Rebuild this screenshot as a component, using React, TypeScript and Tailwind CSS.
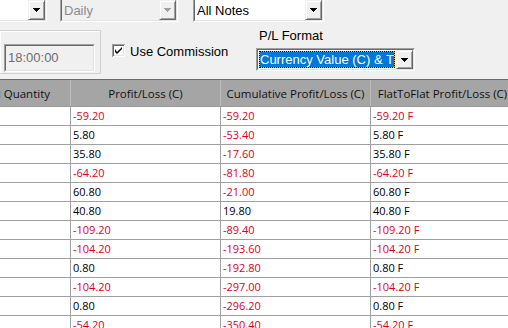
import React from "react";

const rows: [string, string, string][] = [
  ["-59.20", "-59.20", "-59.20 F"],
  ["5.80", "-53.40", "5.80 F"],
  ["35.80", "-17.60", "35.80 F"],
  ["-64.20", "-81.80", "-64.20 F"],
  ["60.80", "-21.00", "60.80 F"],
  ["40.80", "19.80", "40.80 F"],
  ["-109.20", "-89.40", "-109.20 F"],
  ["-104.20", "-193.60", "-104.20 F"],
  ["0.80", "-192.80", "0.80 F"],
  ["-104.20", "-297.00", "-104.20 F"],
  ["0.80", "-296.20", "0.80 F"],
  ["-54.20", "-350.40", "-54.20 F"],
];

function Arrow({ color }: { color: string }) {
  return (
    <svg width="7" height="4" shapeRendering="crispEdges">
      <rect x="0" y="0" width="7" height="1" fill={color} />
      <rect x="1" y="1" width="5" height="1" fill={color} />
      <rect x="2" y="2" width="3" height="1" fill={color} />
      <rect x="3" y="3" width="1" height="1" fill={color} />
    </svg>
  );
}

function DropBtn({ disabled }: { disabled?: boolean }) {
  return (
    <div className="w-[17px] h-full flex items-center justify-center bg-[#f0f0f0] border border-t-[#f0f0f0] border-l-[#f0f0f0] border-r-[#696969] border-b-[#696969] shadow-[inset_1px_1px_0_#ffffff,inset_-1px_-1px_0_#a0a0a0]">
      <Arrow color={disabled ? "#a0a0a0" : "#000000"} />
    </div>
  );
}

function Combo({
  className,
  text,
  disabled,
}: {
  className: string;
  text: string;
  disabled?: boolean;
}) {
  return (
    <div
      className={
        "flex border border-t-[#a0a0a0] border-l-[#a0a0a0] border-r-white border-b-white " +
        className
      }
    >
      <div
        className={
          disabled
            ? "flex-1 flex min-w-0 border border-t-[#696969] border-l-[#696969] border-r-[#e3e3e3] border-b-[#e3e3e3] bg-[#f0f0f0]"
            : "flex-1 flex min-w-0 border border-t-[#696969] border-l-[#696969] border-r-[#e3e3e3] border-b-[#e3e3e3] bg-white"
        }
      >
        <div
          className={
            disabled
              ? "flex-1 min-w-0 overflow-hidden whitespace-nowrap pl-[2px] pt-[3px] leading-[16px] text-[#8c8c8c]"
              : "flex-1 min-w-0 overflow-hidden whitespace-nowrap pl-[2px] pt-[3px] leading-[16px] text-black"
          }
        >
          {text}
        </div>
        <DropBtn disabled={disabled} />
      </div>
    </div>
  );
}

function CheckBox() {
  return (
    <svg width="13" height="13" shapeRendering="crispEdges">
      <rect x="0" y="0" width="13" height="13" fill="#a0a0a0" />
      <rect x="1" y="1" width="12" height="12" fill="#ffffff" />
      <rect x="1" y="1" width="11" height="11" fill="#696969" />
      <rect x="2" y="2" width="10" height="10" fill="#e3e3e3" />
      <rect x="2" y="2" width="9" height="9" fill="#ffffff" />
      <path
        d="M3 5 L3 8 L5 10 L10 5 L10 3 L5 8 Z"
        fill="#000000"
        shapeRendering="geometricPrecision"
      />
    </svg>
  );
}

export default function App() {
  return (
    <div className="w-[508px] h-[328px] overflow-hidden bg-[#f0f0f0] font-['Liberation_Sans',Arial,sans-serif] text-[13px] text-black">
      {/* top controls */}
      <div className="h-[79px] overflow-hidden">
        <div className="flex mt-[-2px] h-[24px]">
          <Combo className="w-[49px] ml-[-2px]" text="" />
          <Combo className="w-[118px] ml-[13px]" text="Daily" disabled />
          <Combo className="w-[131px] ml-[15px]" text="All Notes" />
        </div>
        <div className="flex items-start">
          {/* group box */}
          <div className="mt-[8px] ml-[-1px] w-[102px] h-[44px] border border-[#d0d0d0] shadow-[inset_1px_1px_0_#ffffff] pt-[13px] pl-[4px]">
            <div className="w-[91px] h-[28px] border border-t-[#a0a0a0] border-l-[#a0a0a0] border-r-white border-b-white">
              <div className="w-full h-full border border-t-[#696969] border-l-[#696969] border-r-[#e3e3e3] border-b-[#e3e3e3] bg-[#f0f0f0] pl-[2px] flex items-center text-[#6d6d6d]">
                18:00:00
              </div>
            </div>
          </div>
          {/* checkbox */}
          <div className="ml-[11px] mt-[22px] w-[144px] flex items-center h-[13px]">
            <CheckBox />
            <span className="ml-[5px] leading-[13px] pt-[1px]">Use Commission</span>
          </div>
          {/* P/L format */}
          <div className="mt-[6px] flex flex-col">
            <div className="pl-[3px] leading-[15px] h-[15px]">P/L Format</div>
            <div className="mt-[5px] w-[159px] h-[23px] flex border border-t-[#a0a0a0] border-l-[#a0a0a0] border-r-white border-b-white">
              <div className="flex-1 flex min-w-0 border border-t-[#696969] border-l-[#696969] border-r-[#e3e3e3] border-b-[#e3e3e3] bg-white">
                <div className="flex-1 min-w-0 p-[1px] bg-white">
                  <div className="h-full bg-[#f5a623]">
                    <div className="h-full border border-dotted border-black bg-[#0078d7] bg-clip-padding overflow-hidden whitespace-nowrap text-white leading-[15px] pl-[0px]">
                      Currency Value (C) &amp; Ticks
                    </div>
                  </div>
                </div>
                <DropBtn />
              </div>
            </div>
          </div>
        </div>
      </div>

      {/* grid */}
      <div className="border-t border-[#6a6a6a] font-['Open_Sans','Noto_Sans',sans-serif]">
        <div className="flex h-[27px] bg-[#a5a5a5] border-b border-[#9a9a9a] text-[11.5px] text-[#111111] whitespace-nowrap">
          <div className="w-[71px] shrink-0 border-r border-[#bdbdbd] overflow-hidden flex items-center justify-end pr-[20px] pt-[1px]">
            Filled Quantity
          </div>
          <div className="w-[150px] shrink-0 border-r border-[#bdbdbd] flex items-center justify-center pt-[1px]">
            Profit/Loss (C)
          </div>
          <div className="w-[150px] shrink-0 border-r border-[#bdbdbd] flex items-center justify-center pt-[1px]">
            Cumulative Profit/Loss (C)
          </div>
          <div className="w-[150px] shrink-0 border-r border-[#bdbdbd] flex items-center justify-center pr-[6px] pt-[1px]">
            FlatToFlat Profit/Loss (C)
          </div>
        </div>
        <div className="bg-white">
          {rows.map((r, i) => (
            <div
              key={i}
              className="flex h-[19px] border-b border-[#a0a0a0] text-[11px] whitespace-nowrap"
            >
              <div className="w-[71px] shrink-0 border-r border-[#a0a0a0]" />
              {r.map((v, j) => (
                <div
                  key={j}
                  className={
                    (v.startsWith("-") ? "text-[#e0001a] " : "text-black ") +
                    "w-[150px] shrink-0 border-r border-[#a0a0a0] pl-[2px] leading-[18px]"
                  }
                >
                  {v}
                </div>
              ))}
            </div>
          ))}
        </div>
      </div>
    </div>
  );
}
